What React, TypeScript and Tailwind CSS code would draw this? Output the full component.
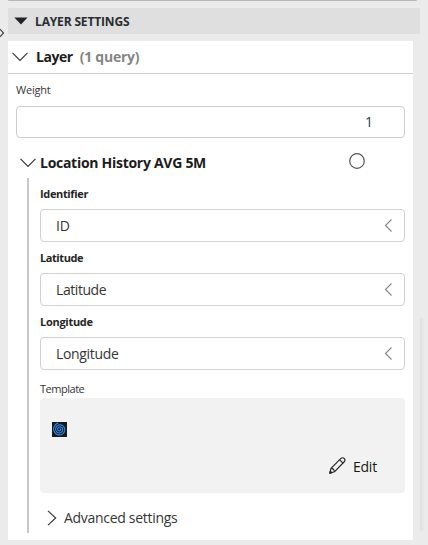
import React from "react";

function Chevron({ points, w, h, color = "#333333" }: { points: string; w: number; h: number; color?: string }) {
  return (
    <svg width={w} height={h} viewBox={`0 0 ${w} ${h}`} fill="none" stroke={color} strokeWidth="1.1" className="shrink-0">
      <polyline points={points} />
    </svg>
  );
}

// Archimedean spiral, three turns out to the edge of the tile
const spiralPoints = Array.from({ length: 91 }, (_, i) => {
  const turn = (i / 90) * Math.PI * 6;
  const radius = 0.4 + (i / 90) * 6.1;
  return `${(7.7 + radius * Math.cos(turn - 1.8)).toFixed(2)},${(7.4 + radius * Math.sin(turn - 1.8)).toFixed(2)}`;
}).join(" ");

function Field({ label, value, spacing, labelSpacing }: { label: string; value: string; spacing: string; labelSpacing: string }) {
  return (
    <div className="h-16">
      <div className={`h-[24px] pt-[1px] text-[11px] leading-4 font-bold text-[#252525] ${labelSpacing}`}>{label}</div>
      <div className="flex h-[33px] w-[365px] items-center justify-between rounded-[4px] border border-[#d2d2d2] bg-white pr-[11px] pl-[15px]">
        <span className={`pt-px text-[14px] leading-5 text-[#363636] ${spacing}`}>{value}</span>
        <Chevron points="7.5,0.5 1.5,6.5 7.5,12.5" w={9} h={13} color="#858585" />
      </div>
    </div>
  );
}

export default function App() {
  return (
    <div className="relative h-[545px] w-[428px] overflow-hidden bg-[#ebebeb] pl-2 font-['Open_Sans','Noto_Sans',sans-serif] text-[#252525]">
      <div className="h-px w-[409px] rounded-b bg-[#b9b9b9]" />
      <header className="mt-[7px] flex h-[26px] w-[412px] items-center bg-[#dfdfdf] pl-[6px]">
        <svg width="14" height="8" viewBox="0 0 14 8" className="shrink-0">
          <path d="M0.3 0.5H13.5L7 7.5Z" fill="#202428" />
        </svg>
        <h1 className="ml-[7px] pt-px text-[12px] leading-5 font-bold tracking-[-0.15px] whitespace-nowrap text-[#292d31]">LAYER SETTINGS</h1>
      </header>

      <main className="mt-[7px] h-[499px] w-[405px] bg-white">
        <div className="flex h-[33px] items-center border-b border-[#cfcfcf] pl-1">
          <Chevron points="0.5,0.8 8,8.5 15.5,0.8" w={16} h={10} />
          <span className="ml-2 text-[14px] leading-5 font-bold tracking-[-0.45px] text-[#1c1c1c]">Layer</span>
          <span className="ml-[7px] text-[14px] leading-5 font-bold tracking-[-0.25px] whitespace-nowrap text-[#858585]">(1 query)</span>
        </div>

        <div className="px-2 pt-2">
          <div className="h-6 text-[11px] leading-4 tracking-[-0.2px] text-[#363636]">Weight</div>
          <div className="flex h-8 w-[389px] items-center justify-end rounded-[4px] border border-[#cdcdcd] pr-[31px] pb-px text-[14px] leading-5 text-[#303b48]">1</div>
        </div>

        <div className="flex h-10 items-center pt-[9px] pl-3">
          <Chevron points="0.5,0.8 8,8.5 15.5,0.8" w={16} h={10} />
          <span className="ml-1 w-[309px] text-[14px] leading-5 font-bold tracking-[-0.28px] text-[#1c1c1c]">Location History AVG 5M</span>
          <svg width="16" height="16" viewBox="0 0 16 16" fill="none" className="-mt-[3px] shrink-0">
            <circle cx="8" cy="8" r="7.3" stroke="#555555" strokeWidth="1.2" />
          </svg>
        </div>

        <section className="ml-[19px] h-[355px] border-l-2 border-[#c8c8c8] pt-[7px] pl-[11px]">
          <Field label="Identifier" value="ID" labelSpacing="tracking-[-0.35px]" spacing="tracking-[-0.1px]" />
          <Field label="Latitude" value="Latitude" labelSpacing="tracking-[-0.42px]" spacing="tracking-[-0.43px]" />
          <Field label="Longitude" value="Longitude" labelSpacing="tracking-[-0.28px]" spacing="tracking-[-0.33px]" />
          <div className="h-[21px] pt-[4px] text-[11px] leading-4 tracking-[-0.48px] text-[#363636]">Template</div>
          <div className="flex h-[95px] w-[365px] flex-col justify-between rounded-[4px] bg-[#f2f2f2] pt-6 pr-[28px] pb-4 pl-3">
            <svg width="15" height="15" viewBox="0 0 15 15" fill="none">
              <rect width="15" height="15" fill="#17191c" />
              <polyline points={spiralPoints} stroke="#2d84e2" strokeWidth="1.2" />
            </svg>
            <button className="flex h-[21px] items-center self-end text-[14px] leading-5 text-[#181818]">
              <svg width="17" height="17" viewBox="0 0 17 17" fill="none" stroke="#242424" strokeWidth="1.15" strokeLinejoin="round" className="-mt-[2px]">
                <path d="M0.8 16.2L2 11.4L11.7 1.7C14.2-.7 17.4 2.5 15 5L5.4 14.8Z" />
                <path d="M2 11.4C3.7 11.4 5.2 12.8 5.4 14.8M10.7 2.8L14 6.1" />
                <path d="M0.8 16.2L1.3 14.1L2.8 15.6Z" fill="#242424" />
              </svg>
              <span className="ml-[7px] tracking-[-0.2px]">Edit</span>
            </button>
          </div>
          <div className="mt-4 flex h-[18px] items-center pl-[7px]">
            <Chevron points="1,0.8 8.7,8 1,15.2" w={10} h={16} />
            <span className="ml-[7px] text-[14px] leading-5 tracking-[-0.3px] whitespace-nowrap text-[#363636]">Advanced settings</span>
          </div>
        </section>
      </main>

      <svg width="5" height="10" viewBox="0 0 5 10" fill="none" className="absolute top-7 left-0">
        <path d="M0 1.2L3.5 5L0 8.8" stroke="#444444" strokeWidth="1.2" />
      </svg>
      <div className="absolute top-[318px] left-[420px] h-[213px] w-[4px] bg-gradient-to-r from-[#e1e1e1] to-[#e9e9e9]" />
    </div>
  );
}
